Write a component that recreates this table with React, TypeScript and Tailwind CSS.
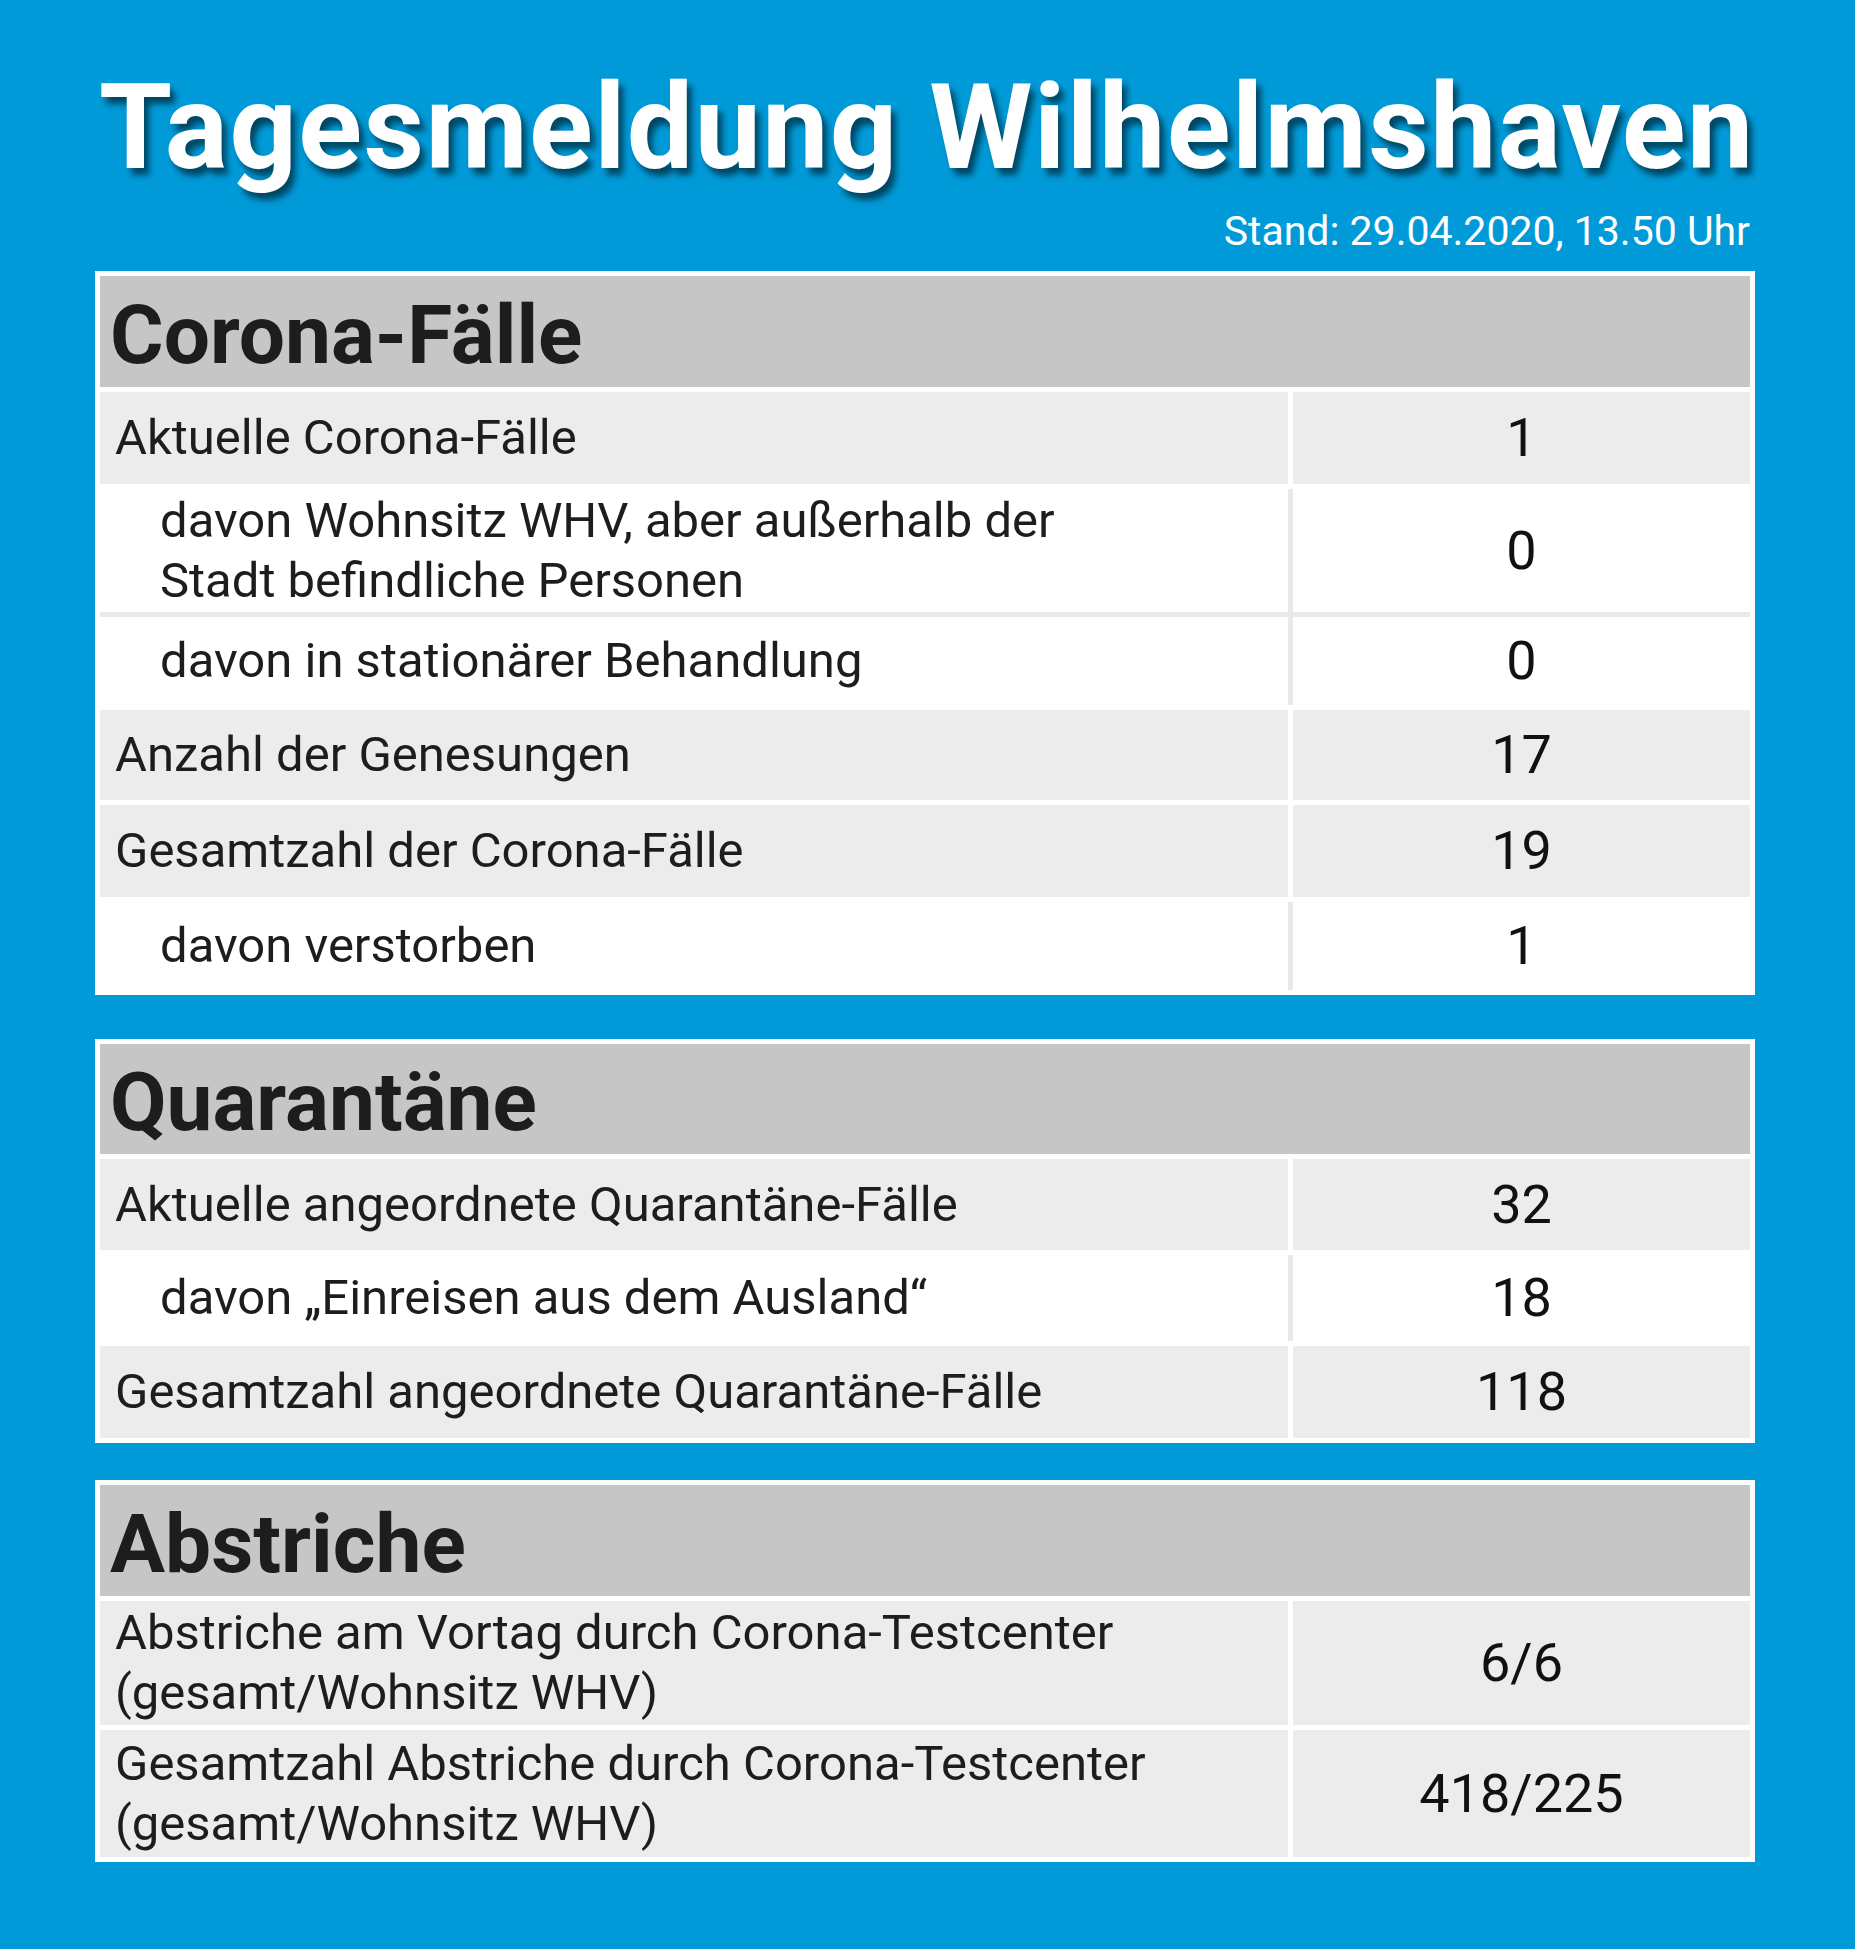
import { Fragment, type ReactNode } from "react";

type Row = {
  label: ReactNode;
  value: string;
  h: string;
  shade?: boolean;
  indent?: boolean;
};

const corona: Row[] = [
  { label: "Aktuelle Corona-Fälle", value: "1", h: "h-[92px]", shade: true },
  {
    label: (
      <>
        davon Wohnsitz WHV, aber außerhalb der
        <br />
        Stadt befindliche Personen
      </>
    ),
    value: "0",
    h: "h-[123px]",
    indent: true,
  },
  { label: "davon in stationärer Behandlung", value: "0", h: "h-[88px]", indent: true },
  { label: "Anzahl der Genesungen", value: "17", h: "h-[90px]", shade: true },
  { label: "Gesamtzahl der Corona-Fälle", value: "19", h: "h-[92px]", shade: true },
  { label: "davon verstorben", value: "1", h: "h-[88px]", indent: true },
];

const quarantaene: Row[] = [
  { label: "Aktuelle angeordnete Quarantäne-Fälle", value: "32", h: "h-[91px]", shade: true },
  { label: "davon „Einreisen aus dem Ausland“", value: "18", h: "h-[86px]", indent: true },
  { label: "Gesamtzahl angeordnete Quarantäne-Fälle", value: "118", h: "h-[92px]", shade: true },
];

const abstriche: Row[] = [
  {
    label: (
      <>
        Abstriche am Vortag durch Corona-Testcenter
        <br />
        (gesamt/Wohnsitz WHV)
      </>
    ),
    value: "6/6",
    h: "h-[124px]",
    shade: true,
  },
  {
    label: (
      <>
        Gesamtzahl Abstriche durch Corona-Testcenter
        <br />
        (gesamt/Wohnsitz WHV)
      </>
    ),
    value: "418/225",
    h: "h-[127px]",
    shade: true,
  },
];

function Tabelle({ titel, kopf, rows }: { titel: string; kopf: string; rows: Row[] }) {
  return (
    <div className="bg-white p-[5px]">
      <div className={`${kopf} bg-[#c6c6c6] flex items-end pl-[10px] pb-[11px]`}>
        <h2 className="text-[82px] font-bold leading-none text-[#1d1d1b]">{titel}</h2>
      </div>
      {rows.map((r, i) => {
        const prevWeiss = i > 0 && !rows[i - 1].shade;
        const trenn = prevWeiss && !r.shade ? "bg-[#e9e9e9]" : "bg-white";
        const zelle = r.shade ? "bg-[#ececec]" : "bg-white";
        return (
          <Fragment key={i}>
            <div className={`h-[5px] ${trenn}`} />
            <div className={`flex ${r.h}`}>
              <div
                className={`w-[1188px] flex items-center ${zelle} ${r.indent ? "pl-[60px]" : "pl-[15px]"} text-[49px] leading-[60px] text-[#1d1d1b]`}
              >
                <p>{r.label}</p>
              </div>
              <div className={`w-[5px] ${r.shade ? "bg-white" : "bg-[#e9e9e9]"}`} />
              <div className={`flex-1 flex items-center justify-center ${zelle} text-[54px] leading-none text-[#111]`}>
                {r.value}
              </div>
            </div>
          </Fragment>
        );
      })}
    </div>
  );
}

export default function App() {
  return (
    <div className="min-h-screen bg-[#009ad8] font-['Roboto','Noto_Sans',sans-serif] pb-[80px]">
      <div className="ml-[95px] w-[1660px]">
        <h1 className="pt-[69px] pl-[4px] text-[118px] font-bold leading-none tracking-[0.012em] text-white [text-shadow:5px_7px_6px_rgba(0,0,0,0.55)]">
          Tagesmeldung Wilhelmshaven
        </h1>
        <p className="mt-[24px] pr-[5px] text-right text-[41px] leading-none text-white">
          Stand: 29.04.2020, 13.50 Uhr
        </p>
        <div className="mt-[19px]">
          <Tabelle titel="Corona-Fälle" kopf="h-[111px]" rows={corona} />
        </div>
        <div className="mt-[44px]">
          <Tabelle titel="Quarantäne" kopf="h-[110px]" rows={quarantaene} />
        </div>
        <div className="mt-[37px]">
          <Tabelle titel="Abstriche" kopf="h-[111px]" rows={abstriche} />
        </div>
      </div>
    </div>
  );
}
